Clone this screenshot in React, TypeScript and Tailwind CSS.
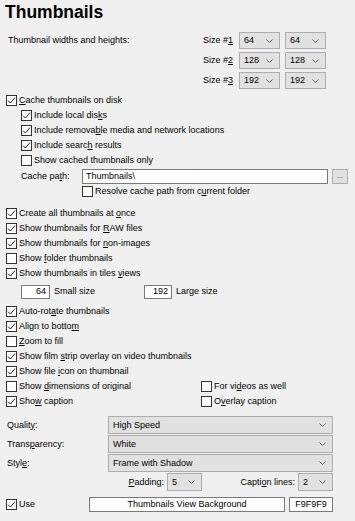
import React from "react";

type Kids = { children?: React.ReactNode };

function Check({ checked }: { checked?: boolean }) {
  return (
    <span className="w-[11px] h-[11px] border border-[#333333] bg-white flex items-center justify-center shrink-0">
      {checked && (
        <svg width="9" height="9" viewBox="0 0 9 9">
          <polyline
            points="1,4.6 3.4,7 8,1.6"
            fill="none"
            stroke="#262626"
            strokeWidth="1"
          />
        </svg>
      )}
    </span>
  );
}

function CheckRow({
  checked,
  className = "pl-[6px]",
  children,
}: Kids & { checked?: boolean; className?: string }) {
  return (
    <div className={`h-[15px] flex items-center gap-[2px] ${className}`}>
      <Check checked={checked} />
      <span className="whitespace-nowrap">{children}</span>
    </div>
  );
}

function Chevron() {
  return (
    <svg width="7" height="4" viewBox="0 0 7 4" className="shrink-0">
      <polyline points="0.5,0.5 3.5,3.5 6.5,0.5" fill="none" stroke="#606060" strokeWidth="1" />
    </svg>
  );
}

function Combo({ value, className = "" }: { value: string; className?: string }) {
  return (
    <div
      className={`bg-[#e1e1e1] border border-[#adadad] flex items-center pl-[4px] pr-[6px] ${className}`}
    >
      <span className="flex-1 whitespace-nowrap">{value}</span>
      <Chevron />
    </div>
  );
}

export default function App() {
  const sizes = [
    { n: "1", w: "64", h: "64" },
    { n: "2", w: "128", h: "128" },
    { n: "3", w: "192", h: "192" },
  ];

  return (
    <div className="w-[355px] h-[521px] bg-[#f0f0f0] overflow-hidden text-[9px] leading-none text-black font-['Liberation_Sans',Arial,sans-serif]">
      <h1 className="text-[17.5px] font-bold leading-[22px] pl-[5px] pt-[1px]">Thumbnails</h1>

      {/* SIZES */}
      <div className="flex mt-[9px]">
        <div className="w-[203px] pl-[8px] h-[17px] flex items-center">
          Thumbnail widths and heights:
        </div>
        <div className="flex flex-col gap-[3px]">
          {sizes.map((s) => (
            <div key={s.n} className="flex items-center">
              <span className="w-[36px]">
                Size #<u>{s.n}</u>
              </span>
              <Combo value={s.w} className="w-[41px] h-[17px]" />
              <Combo value={s.h} className="w-[41px] h-[17px] ml-[5px]" />
            </div>
          ))}
        </div>
      </div>

      {/* CACHE */}
      <div className="mt-[4px]">
        <CheckRow checked>
          <u>C</u>ache thumbnails on disk
        </CheckRow>
        <CheckRow checked className="pl-[21px]">
          Include local dis<u>k</u>s
        </CheckRow>
        <CheckRow checked className="pl-[21px]">
          Include remova<u>b</u>le media and network locations
        </CheckRow>
        <CheckRow checked className="pl-[21px]">
          Include searc<u>h</u> results
        </CheckRow>
        <CheckRow className="pl-[21px]">Show cached thumbnails only</CheckRow>
        <div className="h-[16px] flex items-center">
          <span className="w-[82px] pl-[21px]">
            Cache pa<u>t</u>h:
          </span>
          <div className="w-[246px] h-[15px] bg-white border border-[#7a7a7a] flex items-center pl-[3px]">
            Thumbnails\
          </div>
          <div className="w-[16px] h-[15px] ml-[4px] bg-[#e1e1e1] border border-[#adadad] flex items-center justify-center text-[8px] text-[#444]">
            ...
          </div>
        </div>
        <CheckRow className="pl-[82px]">
          Resolve cache path from c<u>u</u>rrent folder
        </CheckRow>
      </div>

      {/* GENERAL */}
      <div className="mt-[7px]">
        <CheckRow checked>
          Create all thumbnails at <u>o</u>nce
        </CheckRow>
        <CheckRow checked>
          Show thumbnails for <u>R</u>AW files
        </CheckRow>
        <CheckRow checked>
          Show thumbnails for <u>n</u>on-images
        </CheckRow>
        <CheckRow>
          Show <u>f</u>older thumbnails
        </CheckRow>
        <CheckRow checked>
          Show thumbnails in tiles <u>v</u>iews
        </CheckRow>
        <div className="h-[15px] mt-[3px] flex items-center pl-[21px]">
          <div className="w-[29px] h-[14px] bg-white border border-[#7a7a7a] flex items-center justify-end pr-[3px]">
            64
          </div>
          <span className="w-[94px] pl-[4px]">Small size</span>
          <div className="w-[28px] h-[14px] bg-white border border-[#7a7a7a] flex items-center justify-end pr-[3px]">
            192
          </div>
          <span className="pl-[4px]">Large size</span>
        </div>
      </div>

      {/* DISPLAY */}
      <div className="mt-[5px]">
        <CheckRow checked>
          Auto-rot<u>a</u>te thumbnails
        </CheckRow>
        <CheckRow checked>
          Align to botto<u>m</u>
        </CheckRow>
        <CheckRow>
          <u>Z</u>oom to fill
        </CheckRow>
        <CheckRow checked>
          Show film <u>s</u>trip overlay on video thumbnails
        </CheckRow>
        <CheckRow checked>
          Show file <u>i</u>con on thumbnail
        </CheckRow>
        <div className="flex">
          <CheckRow className="pl-[6px] w-[195px]">
            Show <u>d</u>imensions of original
          </CheckRow>
          <CheckRow>
            For vi<u>d</u>eos as well
          </CheckRow>
        </div>
        <div className="flex">
          <CheckRow checked className="pl-[6px] w-[195px]">
            Sho<u>w</u> caption
          </CheckRow>
          <CheckRow>
            O<u>v</u>erlay caption
          </CheckRow>
        </div>
      </div>

      {/* STYLE */}
      <div className="mt-[7px] flex flex-col gap-[1px]">
        {[
          { label: <>Qualit<u>y</u>:</>, value: "High Speed" },
          { label: <>Trans<u>p</u>arency:</>, value: "White" },
          { label: <>Styl<u>e</u>:</>, value: "Frame with Shadow" },
        ].map((r) => (
          <div key={r.value} className="h-[18px] flex items-center">
            <span className="w-[108px] pl-[7px]">{r.label}</span>
            <Combo value={r.value} className="w-[225px] h-[18px]" />
          </div>
        ))}
        <div className="h-[18px] flex items-center">
          <span className="w-[167px] text-right pr-[3px]">
            <u>P</u>adding:
          </span>
          <Combo value="5" className="w-[35px] h-[18px]" />
          <span className="w-[96px] text-right pr-[3px]">
            Capti<u>o</u>n lines:
          </span>
          <Combo value="2" className="w-[35px] h-[18px]" />
        </div>
      </div>

      <div className="mt-[6px] h-[15px] flex items-center">
        <div className="w-[89px] flex items-center gap-[2px] pl-[6px]">
          <Check checked />
          <span>Use</span>
        </div>
        <div className="w-[196px] h-[15px] bg-white border border-[#7a7a7a] flex items-center justify-center">
          Thumbnails View Background
        </div>
        <div className="w-[44px] h-[15px] ml-[4px] bg-white border border-[#7a7a7a] flex items-center justify-center">
          F9F9F9
        </div>
      </div>
    </div>
  );
}
